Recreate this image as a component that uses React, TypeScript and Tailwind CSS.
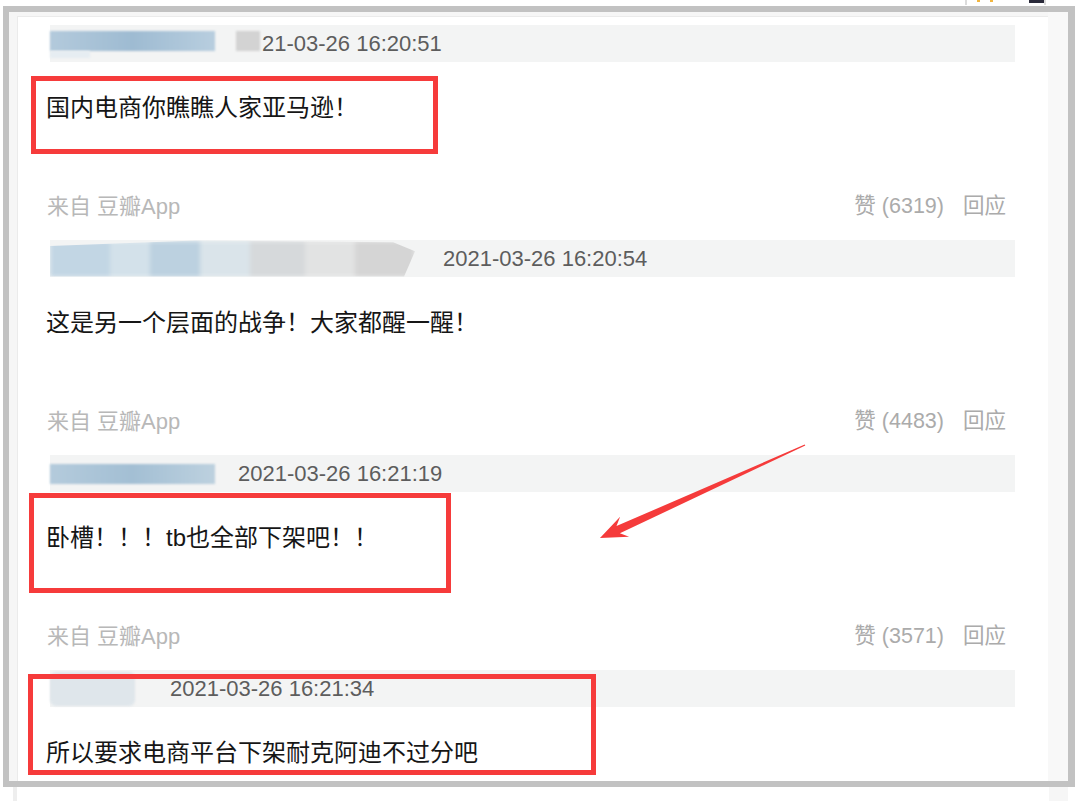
import React from "react";

type Comment = {
  date: string;
  text: string;
  likes?: string;
  blob: React.ReactNode;
  gap: string;
  box?: string;
};

const comments: Comment[] = [
  {
    date: "21-03-26 16:20:51",
    text: "国内电商你瞧瞧人家亚马逊！",
    likes: "6319",
    gap: "ml-[2px]",
    blob: (
      <>
        <div className="relative mb-[6px] h-[20px] w-[165px]">
          <div className="h-full w-full bg-linear-to-r from-[#b3cadc] via-[#9ebbd2] to-[#b8cedf] blur-[1px]" />
          <div className="absolute left-0 top-[20px] h-[7px] w-[40px] bg-[#e6edf2] blur-[1px]" />
        </div>
        <div className="mb-[6px] ml-[21px] h-[20px] w-[24px] bg-[#d3d3d3] blur-[1px]" />
      </>
    ),
    box: "left-[-15px] top-[51px] h-[78px] w-[407px]",
  },
  {
    date: "2021-03-26 16:20:54",
    text: "这是另一个层面的战争！大家都醒一醒！",
    likes: "4483",
    gap: "ml-[28px]",
    blob: (
      <div className="flex h-[36px] w-[365px] blur-[2px] [clip-path:polygon(0_15%,40%_0,94%_5%,100%_30%,97%_100%,0_100%)]">
        <div className="w-[60px] bg-[#c2d6e4]" />
        <div className="w-[40px] bg-[#d3e1ea]" />
        <div className="w-[50px] bg-[#bcd1e0]" />
        <div className="w-[50px] bg-[#dae4ea]" />
        <div className="w-[55px] bg-[#d6d9db]" />
        <div className="w-[50px] bg-[#e2e3e3]" />
        <div className="flex-1 bg-[#d5d5d5]" />
      </div>
    ),
  },
  {
    date: "2021-03-26 16:21:19",
    text: "卧槽！！！tb也全部下架吧！！",
    likes: "3571",
    gap: "ml-[23px]",
    blob: (
      <div className="h-[20px] w-[165px] bg-linear-to-r from-[#b4cbdc] via-[#a3bfd4] to-[#bdd1df] blur-[1px]" />
    ),
    box: "left-[-17px] top-[38px] h-[100px] w-[422px]",
  },
  {
    date: "2021-03-26 16:21:34",
    text: "所以要求电商平台下架耐克阿迪不过分吧",
    gap: "ml-[35px]",
    blob: (
      <div className="h-[34px] w-[85px] rounded-md bg-[#dfe6eb] blur-[1px]" />
    ),
    box: "left-[-18px] top-[4px] h-[101px] w-[568px]",
  },
];

function CommentItem({ c }: { c: Comment }) {
  return (
    <div className="relative h-[215px] w-[969px] shrink-0">
      {/* 头部：用户名（打码）+ 时间 */}
      <div className="ml-[4px] flex h-[37px] items-center bg-[#f3f4f4]">
        {c.blob}
        <span className={`${c.gap} text-[22px] leading-none text-[#5d5d5d]`}>
          {c.date}
        </span>
      </div>
      <p className="mt-[31px] h-[30px] whitespace-nowrap text-[24px] leading-[30px] text-[#161616]">
        {c.text}
      </p>
      {c.likes && (
        <div className="mt-[70px] flex h-[28px] items-center justify-between pl-[1px] pr-[9px] text-[22px] leading-none">
          <span className="text-[#b8b8b8]">来自 豆瓣App</span>
          <span className="flex gap-[19px] text-[21.5px] text-[#ababab]">
            <span>赞 ({c.likes})</span>
            <span>回应</span>
          </span>
        </div>
      )}
      {c.box && (
        <div className={`absolute ${c.box} border-[5px] border-[#f63b3b]`} />
      )}
    </div>
  );
}

export default function App() {
  return (
    <div className="relative h-[801px] w-[1080px] overflow-hidden bg-white font-['Liberation_Sans','Noto_Sans_CJK_SC',sans-serif]">
      {/* 上方露出的一角 */}
      <div className="flex h-[6px] pl-[965px]">
        <div className="flex h-[5px] w-[81px] items-start gap-[10px] border-x-2 border-[#dcdcdc] bg-white pl-[10px]">
          <span className="h-[2px] w-[3px] bg-[#f2b640]" />
          <span className="h-[2px] w-[3px] bg-[#f2b640]" />
          <span className="ml-[26px] h-[3px] w-[16px] bg-[#2a2a3a]" />
        </div>
      </div>

      {/* 截图外框 */}
      <div className="ml-[3px] flex h-[781px] w-[1072px] overflow-hidden border-[6px] border-r-[7px] border-[#c2c2c2] bg-[#f6f6f6]">
        <div className="w-[8px] shrink-0" />
        <div className="mt-[4px] flex w-[1031px] shrink-0 flex-col border-l border-t border-[#ebebeb] bg-white pl-[28px] pt-[8px]">
          {comments.map((c) => (
            <CommentItem key={c.date} c={c} />
          ))}
        </div>
        <div className="flex-1 bg-[#f8f8f8]" />
      </div>

      {/* 底部下方的页面 */}
      <div className="flex h-[14px]">
        <div className="ml-[13px] w-[4px] bg-[#eeeeee]" />
        <div className="ml-auto mr-[12px] w-[19px] bg-[#f6f6f6]" />
      </div>

      {/* 红色箭头 */}
      <svg
        className="pointer-events-none absolute left-0 top-0"
        width="1080"
        height="801"
        viewBox="0 0 1080 801"
      >
        <polygon
          fill="#f53b3b"
          points="600,538 629.1,536.8 619.9,533.3 805.3,445.5 804.7,444.5 616.5,526.1 620.1,516.8"
        />
      </svg>
    </div>
  );
}
